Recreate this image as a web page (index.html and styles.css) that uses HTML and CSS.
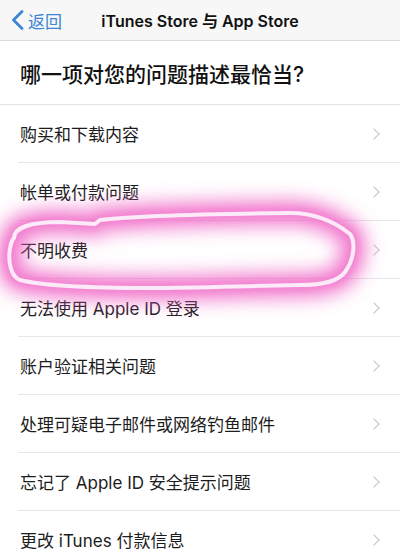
FILE: index.html
```html
<!DOCTYPE html>
<html lang="zh-CN">
<head>
<meta charset="utf-8">
<title>iTunes Store 与 App Store</title>
<link rel="stylesheet" href="styles.css">
</head>
<body>
<div class="page">
  <header class="nav">
    <a class="back">
      <svg class="back-chev" width="13" height="22" viewBox="0 0 13 22"><path d="M11 2.5 L2.5 11 L11 19.5" fill="none" stroke="#3a86d6" stroke-width="2.8" stroke-linecap="round" stroke-linejoin="round"/></svg>
      <span>返回</span>
    </a>
    <div class="title">iTunes Store 与 App Store</div>
  </header>
  <main>
    <h1 class="question">哪一项对您的问题描述最恰当?</h1>
    <ul class="list">
      <li class="row"><span>购买和下载内容</span><i class="chev"></i></li>
      <li class="row"><span>帐单或付款问题</span><i class="chev"></i></li>
      <li class="row"><span>不明收费</span><i class="chev"></i></li>
      <li class="row"><span>无法使用 Apple ID 登录</span><i class="chev"></i></li>
      <li class="row"><span>账户验证相关问题</span><i class="chev"></i></li>
      <li class="row"><span>处理可疑电子邮件或网络钓鱼邮件</span><i class="chev"></i></li>
      <li class="row"><span>忘记了 Apple ID 安全提示问题</span><i class="chev"></i></li>
      <li class="row"><span>更改 iTunes 付款信息</span><i class="chev"></i></li>
    </ul>
  </main>
  <svg class="mark" width="400" height="553" viewBox="0 0 400 553">
    <defs>
      <filter id="glow" x="-30%" y="-80%" width="160%" height="260%"><feGaussianBlur stdDeviation="9"/></filter>
      <filter id="glow2" x="-30%" y="-80%" width="160%" height="260%"><feGaussianBlur stdDeviation="3.5"/></filter>
      <filter id="soft" x="-20%" y="-50%" width="140%" height="200%"><feGaussianBlur stdDeviation="0.7"/></filter>
      <path id="loop" d="M14 238 C14 228 30 222 60 222 L95 224 L100 220 C130 216 200 214 290 213 C315 213 335 222 350 234 C356 242 354 260 345 272 C338 282 320 285 300 285 C240 286 200 288 150 288 C80 288 40 285 20 280 C10 276 8 260 10 248 C11 243 12 240 14 238 Z"/>
    </defs>
    <use href="#loop" fill="none" stroke="#ef5cc3" stroke-width="26" stroke-opacity="0.75" filter="url(#glow)"/>
    <use href="#loop" fill="none" stroke="#f27ccf" stroke-width="10" stroke-opacity="0.7" filter="url(#glow2)"/>
    <use href="#loop" fill="none" stroke="#fdeaf8" stroke-width="4" filter="url(#soft)"/>
  </svg>
</div>
</body>
</html>
```

FILE: styles.css
```css
* { box-sizing: border-box; }
html, body { margin: 0; padding: 0; background: #fff; }
body {
  font-family: "Inter", "Noto Sans CJK SC", sans-serif;
  color: #1c1c1c;
  width: 400px;
  height: 553px;
  overflow: hidden;
}
.page { position: relative; width: 400px; }
.nav {
  position: relative;
  height: 41px;
  background: #f7f7f7;
  border-bottom: 1px solid #dcdcdc;
  display: flex;
  align-items: center;
  justify-content: center;
}
.back {
  position: absolute;
  left: 11px;
  top: 0;
  height: 40px;
  display: flex;
  align-items: center;
  gap: 4px;
  color: #3a86d6;
  font-size: 17px;
}
.back-chev { display: block; }
.title {
  font-size: 16px;
  font-weight: 600;
  color: #111;
  letter-spacing: 0;
}
.question {
  margin: 0;
  height: 64px;
  display: flex;
  align-items: center;
  padding-left: 20px;
  font-size: 21px;
  font-weight: 500;
  color: #111;
  border-bottom: 1px solid #e3e3e3;
}
.list { list-style: none; margin: 0; padding: 0 0 0 18px; }
.row {
  height: 58px;
  display: flex;
  align-items: center;
  justify-content: space-between;
  padding: 0 20px 0 2px;
  border-bottom: 1px solid #e6e6e6;
  font-size: 17px;
  color: #1c1c1c;
}
.chev {
  width: 8px;
  height: 8px;
  border-top: 1.6px solid #c4c4c8;
  border-right: 1.6px solid #c4c4c8;
  transform: rotate(45deg);
  margin-right: 2px;
}
.mark {
  position: absolute;
  left: 0;
  top: 0;
  pointer-events: none;
}
```
